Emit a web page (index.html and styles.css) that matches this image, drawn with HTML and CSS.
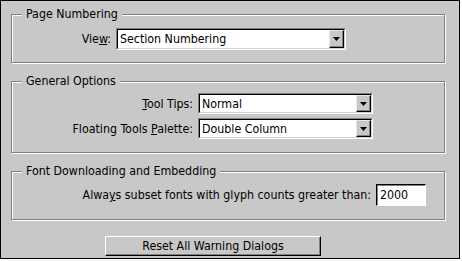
FILE: index.html
```html
<!DOCTYPE html>
<html lang="en">
<head>
	<meta charset="UTF-8">
	<title>Preferences</title>
	<link rel="stylesheet" href="styles.css">
</head>
<body>

	<div class="dialog">
		<fieldset class="group group-page">
			<legend>Page Numbering</legend>
			<div class="row">
				<label class="label">Vie<u>w</u>:</label>
				<div class="select select-view">
					<span class="value">Section Numbering</span>
					<span class="arrow"><svg width="7" height="4" viewBox="0 0 7 4"><path d="M0 0h7L3.5 4z"/></svg></span>
				</div>
			</div>
		</fieldset>

		<fieldset class="group group-general">
			<legend>General Options</legend>
			<div class="row">
				<label class="label"><u>T</u>ool Tips:</label>
				<div class="select select-small">
					<span class="value">Normal</span>
					<span class="arrow"><svg width="7" height="4" viewBox="0 0 7 4"><path d="M0 0h7L3.5 4z"/></svg></span>
				</div>
			</div>
			<div class="row">
				<label class="label">Floating Tools <u>P</u>alette:</label>
				<div class="select select-small">
					<span class="value">Double Column</span>
					<span class="arrow"><svg width="7" height="4" viewBox="0 0 7 4"><path d="M0 0h7L3.5 4z"/></svg></span>
				</div>
			</div>
		</fieldset>

		<fieldset class="group group-font">
			<legend>Font Downloading and Embedding</legend>
			<div class="row">
				<label class="label">Alwa<u>y</u>s subset fonts with glyph counts greater than:</label>
				<div class="field">2000</div>
			</div>
		</fieldset>

		<div class="actions">
			<button class="btn">Reset All Warning Dialogs</button>
		</div>
	</div>

</body>
</html>
```

FILE: styles.css
```css
body {
	background: #ffffff;
	color: #000;
	font-family: "DejaVu Sans", sans-serif;
	font-stretch: condensed;
	font-size: 12.3px;
	margin: 0;
}
.dialog {
	background: #c8c8c8;
	border: 1px solid #000;
	box-sizing: border-box;
	height: 259px;
	padding: 6px 0 0 10px;
	width: 460px;
}
.group {
	border: 1px solid #808080;
	box-shadow: inset 1px 1px 0 #fff, 1px 1px 0 #fff;
	margin: 0 0 11px;
	padding: 0;
	width: 434px;
	box-sizing: border-box;
}
.group legend {
	background: #c8c8c8;
	line-height: 14px;
	margin-left: 10px;
	padding: 0 4px;
}
.row {
	align-items: center;
	display: flex;
}
.label {
	padding-right: 5px;
	text-align: right;
}
.group-page .row {
	padding: 7px 0 12px;
}
.group-page .label {
	width: 99px;
}
.group-general {
	padding: 5px 0 13px;
}
.group-general .row + .row {
	margin-top: 4px;
}
.group-general .label {
	width: 181px;
}
.group-font .row {
	padding: 6px 0 13px;
}
.group-font .label {
	width: 359px;
}

.select {
	align-items: center;
	background: #fff;
	border: 1px solid;
	border-color: #808080 #fff #fff #808080;
	box-sizing: border-box;
	display: flex;
	height: 22px;
	position: relative;
}
.select::before {
	border: 1px solid;
	border-color: #000 #d4d0c8 #d4d0c8 #000;
	content: "";
	inset: 0;
	position: absolute;
	pointer-events: none;
}
.select-view {
	width: 230px;
}
.select-small {
	height: 21px;
	width: 175px;
}
.select .value {
	flex: 1;
	padding-left: 3px;
}
.select .arrow {
	align-items: center;
	background: #c8c8c8;
	border: 1px solid;
	border-color: #e8e8e8 #000 #000 #e8e8e8;
	box-shadow: inset -1px -1px 0 #808080;
	box-sizing: border-box;
	display: flex;
	height: calc(100% - 2px);
	justify-content: center;
	margin-right: 1px;
	width: 15px;
}
.select .arrow svg {
	display: block;
	fill: #000;
}

.field {
	background: #fff;
	border: 1px solid;
	border-color: #000 #fff #fff #000;
	box-shadow: inset 1px 1px 0 #808080;
	box-sizing: border-box;
	height: 22px;
	line-height: 20px;
	padding-left: 3px;
	width: 50px;
}

.actions {
	padding: 5px 0 0 94px;
}
.btn {
	background: #c8c8c8;
	border: 1px solid;
	border-color: #fff #000 #000 #fff;
	box-shadow: inset -1px -1px 0 #808080;
	color: #000;
	font: inherit;
	height: 20px;
	padding: 0;
	width: 216px;
}
```
